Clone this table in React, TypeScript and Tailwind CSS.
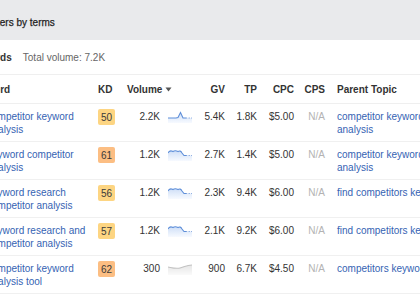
import React from 'react';

type Spark = 'peak' | 'bumps' | 'flat';

const rows: {
  kw: string;
  kd: number;
  vol: string;
  spark: Spark;
  gv: string;
  tp: string;
  cpc: string;
  parent: string;
}[] = [
  { kw: 'competitor keyword analysis', kd: 50, vol: '2.2K', spark: 'peak', gv: '5.4K', tp: '1.8K', cpc: '$5.00', parent: 'competitor keyword analysis' },
  { kw: 'keyword competitor analysis', kd: 61, vol: '1.2K', spark: 'bumps', gv: '2.7K', tp: '1.4K', cpc: '$5.00', parent: 'competitor keyword analysis' },
  { kw: 'keyword research competitor analysis', kd: 56, vol: '1.2K', spark: 'bumps', gv: '2.3K', tp: '9.4K', cpc: '$6.00', parent: 'find competitors keywords' },
  { kw: 'keyword research and competitor analysis', kd: 57, vol: '1.2K', spark: 'bumps', gv: '2.1K', tp: '9.2K', cpc: '$6.00', parent: 'find competitors keywords' },
  { kw: 'competitor keyword analysis tool', kd: 62, vol: '300', spark: 'flat', gv: '900', tp: '6.7K', cpc: '$4.50', parent: 'competitors keywords' },
];

function Sparkline({ kind, id }: { kind: Spark; id: number }) {
  if (kind === 'flat') {
    return (
      <svg width="24" height="12" viewBox="0 0 24 12">
        <defs>
          <linearGradient id={`g${id}`} x1="0" y1="0" x2="0" y2="1">
            <stop offset="0" stopColor="#e6e6e6" />
            <stop offset="1" stopColor="#fafafa" />
          </linearGradient>
        </defs>
        <path d="M0 4 C5 5 8 6 12 5 C16 4 19 2 24 2 L24 12 L0 12 Z" fill={`url(#g${id})`} />
        <path d="M0 4 C5 5 8 6 12 5 C16 4 19 2 24 2" fill="none" stroke="#c2c2c2" strokeWidth="1.1" />
      </svg>
    );
  }
  const line =
    kind === 'peak'
      ? 'M0 7 L8 7 L10 6.5 L12.5 1.5 L15 7 L18 7'
      : 'M0 4 C1 2 3 1.5 5 2.5 C6.5 1.5 8 1.5 10 2.5 C11.5 1.5 13 2 14 4 L16 6.5 L18 6.5';
  const dashY = kind === 'peak' ? 7 : 6.5;
  return (
    <svg width="24" height="12" viewBox="0 0 24 12">
      <defs>
        <linearGradient id={`g${id}`} x1="0" y1="0" x2="0" y2="1">
          <stop offset="0" stopColor="#cfdff7" />
          <stop offset="1" stopColor="#f7faff" />
        </linearGradient>
      </defs>
      <path d={`${line} L24 ${dashY} L24 12 L0 12 Z`} fill={`url(#g${id})`} />
      <path d={line} fill="none" stroke="#5f8fd9" strokeWidth="1.1" />
      <path d={`M18 ${dashY} L24 ${dashY}`} fill="none" stroke="#7fa3dd" strokeWidth="1" strokeDasharray="1.2 1.4" />
    </svg>
  );
}

export default function App() {
  return (
    <div className="w-[420px] h-[300px] overflow-hidden bg-white font-['Liberation_Sans',Arial,sans-serif] text-[10px] leading-[13px] text-[#333]">
      {/* Card title */}
      <div className="h-[40px] bg-[#e9eaec] flex items-center pt-[4px]">
        <span className="-ml-[23px] whitespace-nowrap text-[10px] text-[#1f1f1f] [-webkit-text-stroke:0.25px_#1f1f1f]">
          Clusters by terms
        </span>
      </div>

      {/* Summary */}
      <div className="h-[35px] flex items-center border-b border-[#efefef] whitespace-nowrap pt-[1px]">
        <span className="-ml-[36px] font-bold text-[#333]">Keywords</span>
        <span className="ml-[11px] text-[#666]">Total volume: 7.2K</span>
      </div>

      {/* Table */}
      <div className="-ml-[13px]">
        <div className="h-[29px] flex items-center border-b border-[#efefef] font-bold text-[#333] whitespace-nowrap">
          <div className="w-[111px] shrink-0 -ml-[19px]">Keyword</div>
          <div className="w-[29px] shrink-0 ml-[19px]">KD</div>
          <div className="w-[68px] shrink-0 flex items-center">
            Volume
            <svg width="7" height="5" viewBox="0 0 7 5" className="ml-[3px] mt-[1px]">
              <path d="M0.5 0.5 L6.5 0.5 L3.5 4.5 Z" fill="#555" />
            </svg>
          </div>
          <div className="w-[30px] shrink-0 text-right">GV</div>
          <div className="w-[32px] shrink-0 text-right">TP</div>
          <div className="w-[37px] shrink-0 text-right">CPC</div>
          <div className="w-[31px] shrink-0 text-right">CPS</div>
          <div className="ml-[12px] shrink-0">Parent Topic</div>
        </div>

        {rows.map((r, i) => (
          <div key={i} className="h-[38px] flex items-start pt-[6px] border-b border-[#f0f0f0]">
            <div className="w-[111px] shrink-0 pr-[6px] text-[#3563b3]">{r.kw}</div>
            <div className="w-[29px] shrink-0 -mt-[1px]">
              <span
                className={`inline-flex w-[17px] h-[16px] items-center justify-center rounded-[2px] text-[#3a3a3a] ${
                  r.kd >= 60 ? 'bg-[#fcbe83]' : 'bg-[#fdd582]'
                }`}
              >
                {r.kd}
              </span>
            </div>
            <div className="w-[68px] shrink-0 flex items-start">
              <span className="w-[33px] text-right">{r.vol}</span>
              <span className="ml-[8px] mt-[1px]">
                <Sparkline kind={r.spark} id={i} />
              </span>
            </div>
            <div className="w-[30px] shrink-0 text-right">{r.gv}</div>
            <div className="w-[32px] shrink-0 text-right">{r.tp}</div>
            <div className="w-[37px] shrink-0 text-right">{r.cpc}</div>
            <div className="w-[31px] shrink-0 text-right text-[#b3b3b3]">N/A</div>
            <div className="w-[120px] ml-[12px] shrink-0 text-[#3563b3]">{r.parent}</div>
          </div>
        ))}
      </div>
    </div>
  );
}
